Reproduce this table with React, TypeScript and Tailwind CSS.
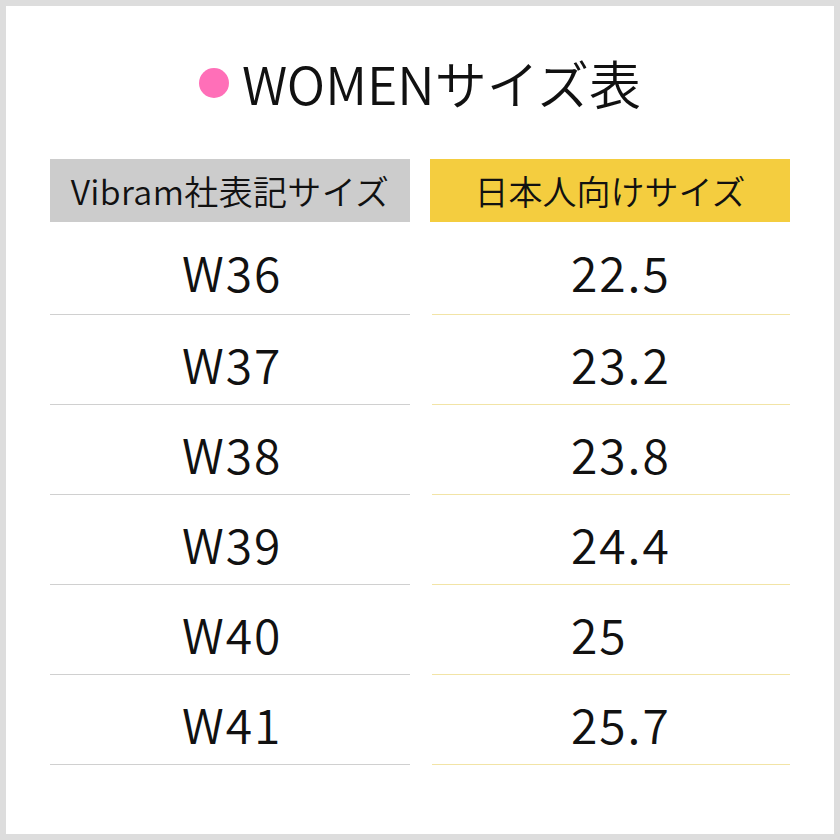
const rows: [string, string][] = [
  ['W36', '22.5'],
  ['W37', '23.2'],
  ['W38', '23.8'],
  ['W39', '24.4'],
  ['W40', '25'],
  ['W41', '25.7'],
];

const font = { fontFamily: '"Noto Sans CJK JP", "Noto Sans", sans-serif' };

export default function App() {
  return (
    <div
      className="flex h-[840px] w-[840px] flex-col border-[6px] border-[#dddddd] bg-white px-[44px] font-[350] text-[#111111]"
      style={font}
    >
      <div className="flex h-[153px] items-center justify-center gap-[13px]">
        <span className="h-[30px] w-[30px] rounded-full bg-[#ff6fb8]" />
        <h1 className="text-[52px] leading-none font-[350]">WOMENサイズ表</h1>
      </div>

      <div className="grid grid-cols-2 gap-x-[20px]">
        <div className="flex h-[63px] items-center justify-center bg-[#cccccc] text-[34px] leading-none tracking-[0.01em]">
          Vibram社表記サイズ
        </div>
        <div className="flex h-[63px] items-center justify-center bg-[#f4cd3f] text-[34px] leading-none">
          日本人向けサイズ
        </div>

        {rows.map(([eu, jp], i) => (
          <div key={eu} className="contents">
            <div
              className={`flex items-center border-b border-[#d0d0d0] pl-[132px] pt-[6px] text-[48px] leading-none tracking-[0.04em] ${
                i === 0 ? 'h-[93px]' : 'h-[90px]'
              }`}
            >
              {eu}
            </div>
            <div
              className={`ml-[2px] flex items-center border-b border-[#f2e4a6] pl-[139px] pt-[6px] text-[48px] leading-none tracking-[0.04em] ${
                i === 0 ? 'h-[93px]' : 'h-[90px]'
              }`}
            >
              {jp}
            </div>
          </div>
        ))}
      </div>
    </div>
  );
}
